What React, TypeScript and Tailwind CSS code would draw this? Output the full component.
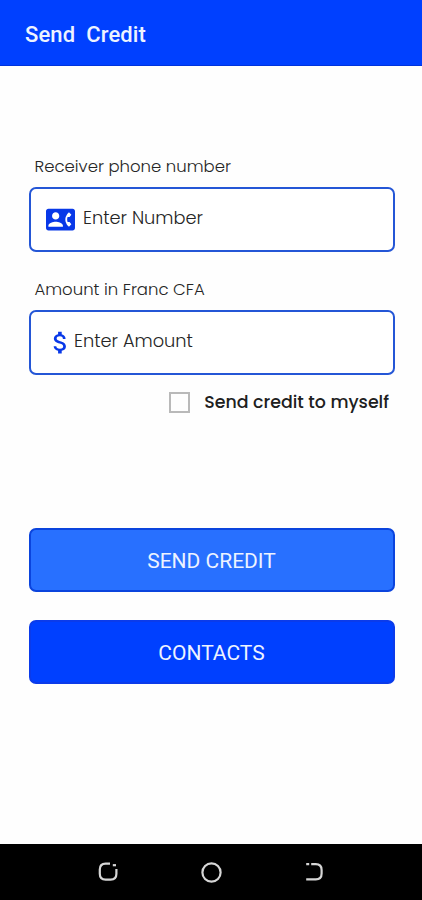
import type { ReactNode } from "react";
import { MdAttachMoney, MdContactPhone } from "react-icons/md";

interface FieldProps {
  label: string;
  children: ReactNode;
}

function Field({ label, children }: FieldProps) {
  return (
    <div>
      <div className="h-[33px] pl-[6px] pt-[0.5px] text-[16.5px] leading-6 font-light">{label}</div>
      <div className="flex h-[65px] items-center rounded-[7px] border-2 border-[#2456d6] bg-white pb-[1px]">
        {children}
      </div>
    </div>
  );
}

function NavigationBar() {
  return (
    <nav className="flex h-14 items-center justify-between bg-black pl-[98px] pr-[98px] text-[#d6d6d6]">
      <svg width="21" height="20" viewBox="0 0 21 20" fill="none" stroke="currentColor" strokeWidth="2.2">
        <path d="M12 1.6H7.6Q1.8 1.6 1.8 7.4v4.4q0 5.8 5.8 5.8h5q5.8 0 5.8-5.8V7" />
        <path d="M14.8 3.2h3.2" />
      </svg>
      <svg width="22" height="22" viewBox="0 0 22 22" fill="none" stroke="currentColor" strokeWidth="2.2">
        <circle cx="10.5" cy="11.5" r="9.1" />
      </svg>
      <svg width="20" height="20" viewBox="0 0 20 20" fill="none" stroke="currentColor" strokeWidth="2.2">
        <path d="M2.2 2.2h3M7.2 2.2h4.6q5.8 0 5.8 5.8v3.6q0 5.8-5.8 5.8H2.2" />
      </svg>
    </nav>
  );
}

export default function App() {
  return (
    <div className="flex h-[900px] w-[422px] flex-col bg-[#fefefe] font-['Poppins','Inter',sans-serif] text-[#252525]">
      <header className="flex h-[66px] items-center border-b border-[#0033dc] bg-[#0040ff] pl-[25px] pt-[3px] font-['Roboto',sans-serif]">
        <h1 className="whitespace-pre text-[22px] font-medium tracking-[0.1px] text-[#edf3ff]">Send  Credit</h1>
      </header>

      <main className="flex-1 pl-[28.5px] pr-[27.5px] pt-[88px]">
        <Field label="Receiver phone number">
          <MdContactPhone className="ml-[15.5px] h-[29px] w-[29px] text-[#0838e8]" />
          <span className="ml-[8px] -mt-[2px] text-[17.8px] font-light">Enter Number</span>
        </Field>

        <div className="mt-[25px]">
          <Field label="Amount in Franc CFA">
            <MdAttachMoney className="ml-[15.5px] h-[29px] w-[29px] text-[#0838e8]" />
            <span className="-ml-[1px] -mt-[2px] text-[17.8px] font-light">Enter Amount</span>
          </Field>
        </div>

        <label className="mt-[15px] flex h-6 items-center justify-end pr-[5.5px]">
          <span className="h-[21px] w-[21px] border-2 border-[#b9b9b9]" />
          <span className="ml-[14px] text-[17.4px] font-medium text-[#202020]">Send credit to myself</span>
        </label>

        <div className="mt-[114px] flex flex-col gap-7 font-['Roboto',sans-serif] text-[21px] text-[#edf3ff]">
          <button className="h-16 rounded-[7px] border-2 border-[#0b44dd] bg-[#2870ff] pt-[4px]">SEND CREDIT</button>
          <button className="h-16 rounded-[7px] border-2 border-[#0b3bea] bg-[#0040ff] pt-[4px]">CONTACTS</button>
        </div>
      </main>

      <NavigationBar />
    </div>
  );
}
